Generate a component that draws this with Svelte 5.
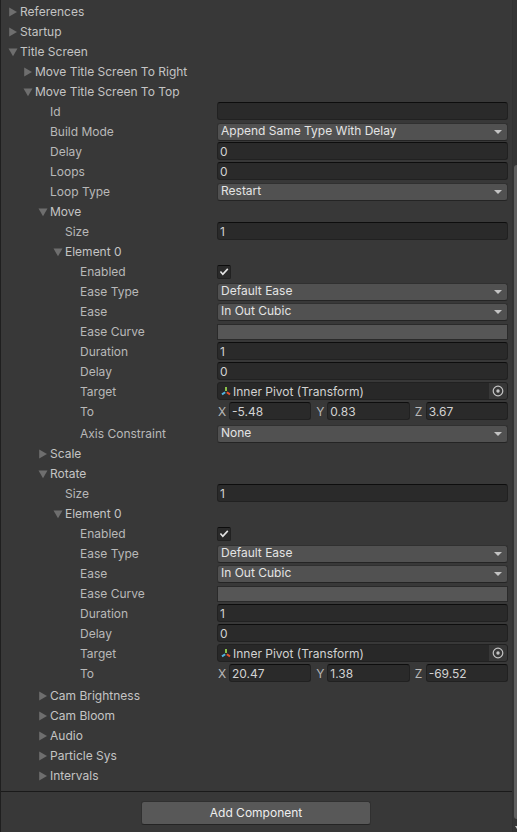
<script>
    const buildModes = ['Append Same Type With Delay', 'Append All', 'Join All'];
    const loopTypes = ['Restart', 'Yoyo', 'Incremental'];
    const easeTypes = ['Default Ease', 'Animation Curve'];
    const eases = ['In Out Cubic', 'Linear', 'In Out Sine'];
    const constraints = ['None', 'X', 'Y', 'Z'];

    function fold(label, children = null) {
        return { kind: 'fold', label, open: children !== null, children: children ?? [] };
    }

    function field(kind, label, value = '', options = []) {
        return { kind, label, value, options };
    }

    function tweenElement(to, extra = []) {
        return fold('Element 0', [
            field('check', 'Enabled', true),
            field('select', 'Ease Type', 'Default Ease', easeTypes),
            field('select', 'Ease', 'In Out Cubic', eases),
            field('curve', 'Ease Curve'),
            field('text', 'Duration', '1'),
            field('text', 'Delay', '0'),
            field('object', 'Target', 'Inner Pivot (Transform)'),
            field('vector', 'To', to),
            ...extra
        ]);
    }

    let tree = $state([
        fold('References'),
        fold('Startup'),
        fold('Title Screen', [
            fold('Move Title Screen To Right'),
            fold('Move Title Screen To Top', [
                field('text', 'Id'),
                field('select', 'Build Mode', 'Append Same Type With Delay', buildModes),
                field('text', 'Delay', '0'),
                field('text', 'Loops', '0'),
                field('select', 'Loop Type', 'Restart', loopTypes),
                fold('Move', [
                    field('text', 'Size', '1'),
                    tweenElement({ X: '-5.48', Y: '0.83', Z: '3.67' }, [
                        field('select', 'Axis Constraint', 'None', constraints)
                    ])
                ]),
                fold('Scale'),
                fold('Rotate', [
                    field('text', 'Size', '1'),
                    tweenElement({ X: '20.47', Y: '1.38', Z: '-69.52' })
                ]),
                fold('Cam Brightness'),
                fold('Cam Bloom'),
                fold('Audio'),
                fold('Particle Sys'),
                fold('Intervals')
            ])
        ])
    ]);
</script>

{#snippet rows(nodes, depth, path)}
    {#each nodes as node, i}
        {@const id = `${path}-${i}`}
        {#if node.kind === 'fold'}
            <button
                class="foldout"
                style:--depth={depth}
                aria-expanded={node.open}
                onclick={() => (node.open = !node.open)}
            >
                <svg class="arrow" viewBox="0 0 10 10">
                    {#if node.open}
                        <path d="M0.5 1.5h9L5 9.3z" />
                    {:else}
                        <path d="M1.2 0.5v9L9 5z" />
                    {/if}
                </svg>
                <span>{node.label}</span>
            </button>
            {#if node.open}
                {@render rows(node.children, depth + 1, id)}
            {/if}
        {:else}
            <div class="row" class:vector-row={node.kind === 'vector'} style:--depth={depth}>
                <label class="name" for={node.kind === 'vector' ? `${id}-X` : id}>{node.label}</label>
                {#if node.kind === 'text'}
                    <input class="text" type="text" {id} bind:value={node.value} />
                {:else if node.kind === 'select'}
                    <div class="dropdown">
                        <select {id} bind:value={node.value}>
                            {#each node.options as option}
                                <option>{option}</option>
                            {/each}
                        </select>
                        <svg class="caret" viewBox="0 0 8 4"><path d="M0 0h8L4 4z" /></svg>
                    </div>
                {:else if node.kind === 'check'}
                    <input class="check" type="checkbox" {id} bind:checked={node.value} />
                {:else if node.kind === 'curve'}
                    <button class="curve" {id} aria-label={node.label}></button>
                {:else if node.kind === 'object'}
                    <div class="object">
                        <svg class="gizmo" viewBox="0 0 10 10">
                            <path d="M5 1v4" stroke="#8bc34a" stroke-width="2" />
                            <path d="M4.2 6.2L1 8.4" stroke="#4fb3e0" stroke-width="2" />
                            <path d="M5.8 6.2L9 8.4" stroke="#e5532d" stroke-width="2" />
                        </svg>
                        <input type="text" {id} value={node.value} readonly />
                        <button class="picker" aria-label="Select object">
                            <svg viewBox="0 0 12 12">
                                <circle cx="6" cy="6" r="4.8" fill="none" stroke="#c4c4c4" stroke-width="1.2" />
                                <circle cx="6" cy="6" r="1.7" fill="#c4c4c4" />
                            </svg>
                        </button>
                    </div>
                {:else if node.kind === 'vector'}
                    <div class="vector">
                        {#each ['X', 'Y', 'Z'] as axis}
                            <div class="axis">
                                <label for={`${id}-${axis}`}>{axis}</label>
                                <input class="text" type="text" id={`${id}-${axis}`} bind:value={node.value[axis]} />
                            </div>
                        {/each}
                    </div>
                {/if}
            </div>
        {/if}
    {/each}
{/snippet}

<div class="window">
    <main class="inspector">
        <div class="properties">
            {@render rows(tree, 0, 'prop')}
        </div>
        <footer>
            <button class="add">Add Component</button>
        </footer>
    </main>
    <div class="scrollbar">
        <div class="thumb"></div>
        <svg class="step" viewBox="0 0 3 4"><path d="M1 1h2v3z" /></svg>
    </div>
</div>

<style>
    :global(body) {
        margin: 0;
        background: #383838;
    }

    .window {
        display: flex;
        min-height: 100vh;
        background: #383838;
        color: #c4c4c4;
        font-family: Inter, "Liberation Sans", sans-serif;
        font-size: 12px;
        line-height: 18px;
    }

    .window * {
        box-sizing: border-box;
    }

    button,
    input,
    select {
        margin: 0;
        padding: 0;
        border: 0;
        background: none;
        color: inherit;
        font: inherit;
        outline: none;
    }

    .inspector {
        flex: 1;
        min-width: 0;
        border-left: 1px solid #1f1f1f;
    }

    .properties {
        display: flex;
        flex-direction: column;
        gap: 2px;
        padding: 2px 4px 7px 0;
    }

    .foldout {
        display: flex;
        align-items: center;
        gap: 2px;
        height: 18px;
        padding-top: 2px;
        padding-left: calc(7px + var(--depth) * 15px);
        text-align: left;
    }

    .arrow {
        width: 10px;
        height: 10px;
        fill: #6e6e6e;
    }

    .row {
        display: grid;
        grid-template-columns: 216px minmax(0, 1fr);
        height: 18px;
    }

    .vector-row {
        margin-bottom: 2px;
    }

    .name {
        padding-left: calc(19px + var(--depth) * 15px);
        color: #b8b8b8;
        line-height: 20px;
        white-space: nowrap;
    }

    .text,
    .object {
        width: 100%;
        min-width: 0;
        height: 18px;
        border: 1px solid #212121;
        border-top-color: #0d0d0d;
        border-radius: 3px;
        background: #2a2a2a;
        color: #d2d2d2;
    }

    .text {
        padding: 2px 2px 0;
    }

    .dropdown {
        display: grid;
        align-items: center;
    }

    .dropdown > * {
        grid-area: 1 / 1;
    }

    .dropdown select {
        width: 100%;
        height: 18px;
        padding: 0 20px 2px 3px;
        appearance: none;
        border: 1px solid #303030;
        border-bottom-color: #242424;
        border-radius: 3px;
        background: #515151;
        color: #e4e4e4;
        line-height: 14px;
    }

    .caret {
        justify-self: end;
        width: 8px;
        height: 4px;
        margin-right: 6px;
        fill: #c4c4c4;
        pointer-events: none;
    }

    .check {
        display: grid;
        place-items: center;
        align-self: center;
        width: 14px;
        height: 14px;
        appearance: none;
        border: 1px solid #212121;
        border-top-color: #0d0d0d;
        border-radius: 2px;
        background: #2a2a2a;
    }

    .check:checked::before {
        content: "";
        width: 10px;
        height: 10px;
        background: #e4e4e4;
        clip-path: polygon(8% 50%, 20% 40%, 38% 60%, 82% 12%, 94% 24%, 38% 84%);
    }

    .curve {
        align-self: center;
        height: 16px;
        border: 1px solid #2a2a2a;
        background: #565656;
    }

    .object {
        display: flex;
        align-items: center;
        overflow: hidden;
        border-color: #212121;
        background: #282828;
    }

    .gizmo {
        flex: none;
        width: 10px;
        height: 10px;
        margin: 0 2px 0 3px;
    }

    .object input {
        flex: 1;
        min-width: 0;
        height: 16px;
        padding-top: 2px;
    }

    .picker {
        display: grid;
        place-items: center;
        width: 18px;
        height: 16px;
        background: #373737;
    }

    .picker svg {
        width: 12px;
        height: 12px;
    }

    .vector {
        display: grid;
        grid-template-columns: repeat(3, minmax(0, 1fr));
        gap: 4px;
    }

    .axis {
        display: grid;
        grid-template-columns: 12px minmax(0, 1fr);
        color: #b8b8b8;
    }

    .axis label {
        padding-left: 1px;
        line-height: 20px;
    }

    footer {
        display: flex;
        justify-content: center;
        padding: 9px 9px 8px 8px;
        border-top: 1px solid #1a1a1a;
    }

    .add {
        width: 230px;
        height: 24px;
        border: 1px solid #303030;
        border-bottom-color: #242424;
        border-radius: 3px;
        background: #585858;
        color: #eeeeee;
    }

    .scrollbar {
        display: flex;
        flex: none;
        flex-direction: column;
        width: 5px;
        padding: 165px 0 4px 1px;
        border-left: 1px solid #323232;
        background: #353535;
    }

    .thumb {
        flex: 1;
        border-radius: 4px 0 0 4px;
        background: #5f5f5f;
    }

    .step {
        width: 3px;
        height: 4px;
        margin-top: 6px;
        fill: #c4c4c4;
    }
</style>
